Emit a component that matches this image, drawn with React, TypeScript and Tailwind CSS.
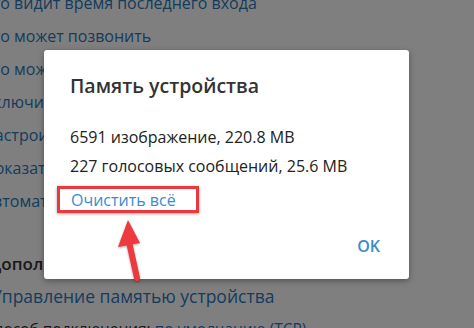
import React from "react";

const blue = "text-[#2b78b8]";

export default function App() {
  return (
    <div className="relative w-[474px] h-[328px] overflow-hidden bg-white font-['Open_Sans',sans-serif]">
      {/* page behind the modal */}
      <div className="flex flex-col -mt-[13px] text-[16px] leading-[33px] whitespace-nowrap">
        <div className={`-ml-[17px] ${blue}`}>Кто видит время последнего входа</div>
        <div className={`-ml-[17px] ${blue}`}>Кто может позвонить</div>
        <div className={`-ml-[17px] ${blue}`}>Кто может приглашать меня в группы</div>
        <div className={`-ml-[17px] ${blue}`}>Включить код-пароль</div>
        <div className={`-ml-[17px] ${blue}`}>Настроить облачный пароль</div>
        <div className={`-ml-[17px] ${blue}`}>Показать все сеансы</div>
        <div className={`-ml-[17px] ${blue}`}>Автоматическое удаление аккаунта</div>
        <div className="h-[29px]" />
        <div className="-ml-[11px] text-[17px] font-semibold text-[#333]">Дополнительно</div>
        <div className={`-ml-[9px] text-[17.5px] ${blue}`}>Управление памятью устройства</div>
        <div className="-ml-[16px] text-[15.5px] text-[#333]">
          Способ подключения: <span className={blue}>по умолчанию (TCP)</span>
        </div>
      </div>

      {/* modal backdrop */}
      <div className="absolute inset-0 bg-black/50" />

      {/* dialog */}
      <div className="absolute left-[44px] top-[50px] w-[365px] h-[229px] bg-white rounded-[3px] shadow-[0_2px_6px_rgba(0,0,0,0.35)] flex flex-col pl-[26px] pr-[29px] whitespace-nowrap">
        <div className="pt-[23px] text-[19.5px] leading-[26px] font-semibold text-[#333]">Память устройства</div>
        <div className="mt-[24px] text-[16px] leading-[29px] text-[#222]">6591 изображение, 220.8 MB</div>
        <div className="text-[16px] leading-[29px] text-[#222]">227 голосовых сообщений, 25.6 MB</div>
        <div className="mt-[5px] -ml-[13px] self-start w-[142px] h-[27px] border-[3px] border-[#e8393c] pl-[11px] text-[16px] leading-[22px] text-[#3b8ccb] shadow-[0_1px_3px_rgba(0,0,0,0.35)]">
          Очистить всё
        </div>
        <div className="mt-[23px] self-end text-[16px] leading-[21px] font-semibold text-[#3b8ccb]">OK</div>
      </div>

      {/* red arrow */}
      <svg
        className="absolute left-[110px] top-[215px] w-[40px] h-[70px] drop-shadow-[0_1px_1px_rgba(0,0,0,0.35)]"
        viewBox="110 215 40 70"
      >
        <polygon points="128,220 118,247 140,243" fill="#ee3a3f" />
        <line x1="129.5" y1="244" x2="137" y2="278" stroke="#ee3a3f" strokeWidth="6" strokeLinecap="round" />
      </svg>
    </div>
  );
}
